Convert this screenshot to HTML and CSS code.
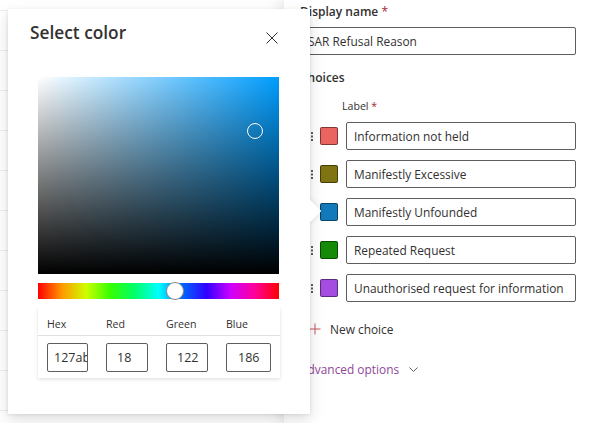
FILE: index.html
```html
<!DOCTYPE html>
<html lang="en">
<head>
<meta charset="utf-8">
<title>Select color</title>
<link rel="stylesheet" href="styles.css">
</head>
<body>
<div class="screen">
  <div class="bg-list">
    <div class="bg-row bg-row-first"></div>
    <div class="bg-row"></div>
    <div class="bg-row"></div>
    <div class="bg-row"></div>
    <div class="bg-row"></div>
    <div class="bg-row"></div>
    <div class="bg-row"></div>
    <div class="bg-row"></div>
    <div class="bg-row"></div>
    <div class="bg-row"></div>
    <div class="bg-row"></div>
  </div>
  <aside class="panel">
    <div class="field-label">Display name <span class="req">*</span></div>
    <div class="textbox name-box">SAR Refusal Reason</div>
    <div class="section-label">Choices</div>
    <div class="col-label">Label <span class="req">*</span></div>
    <ul class="choices">
      <li class="choice">
        <svg class="grip" width="2" height="9" viewBox="0 0 2 9"><rect y="0" width="2" height="2"/><rect y="3.5" width="2" height="2"/><rect y="7" width="2" height="2"/></svg>
        <span class="swatch sw-red"></span>
        <div class="textbox">Information not held</div>
      </li>
      <li class="choice">
        <svg class="grip" width="2" height="9" viewBox="0 0 2 9"><rect y="0" width="2" height="2"/><rect y="3.5" width="2" height="2"/><rect y="7" width="2" height="2"/></svg>
        <span class="swatch sw-olive"></span>
        <div class="textbox">Manifestly Excessive</div>
      </li>
      <li class="choice">
        <svg class="grip" width="2" height="9" viewBox="0 0 2 9"><rect y="0" width="2" height="2"/><rect y="3.5" width="2" height="2"/><rect y="7" width="2" height="2"/></svg>
        <span class="swatch sw-blue"></span>
        <div class="textbox">Manifestly Unfounded</div>
      </li>
      <li class="choice">
        <svg class="grip" width="2" height="9" viewBox="0 0 2 9"><rect y="0" width="2" height="2"/><rect y="3.5" width="2" height="2"/><rect y="7" width="2" height="2"/></svg>
        <span class="swatch sw-green"></span>
        <div class="textbox">Repeated Request</div>
      </li>
      <li class="choice">
        <svg class="grip" width="2" height="9" viewBox="0 0 2 9"><rect y="0" width="2" height="2"/><rect y="3.5" width="2" height="2"/><rect y="7" width="2" height="2"/></svg>
        <span class="swatch sw-purple"></span>
        <div class="textbox">Unauthorised request for information</div>
      </li>
    </ul>
    <div class="new-choice">
      <svg class="plus" width="12" height="12" viewBox="0 0 12 12"><path d="M6 0.5V11.5M0.5 6H11.5"/></svg>
      <span>New choice</span>
    </div>
    <div class="advanced">
      <span>Advanced options</span>
      <svg class="chev" width="9" height="5" viewBox="0 0 9 5"><path d="M0.5 0.5L4.5 4.5L8.5 0.5"/></svg>
    </div>
  </aside>
</div>

<div class="callout">
  <span class="beak"></span>
  <div class="callout-inner">
    <div class="callout-header">
      <h2 class="title">Select color</h2>
      <svg class="close" width="12" height="12" viewBox="0 0 12 12"><path d="M0.5 0.5L11.5 11.5M11.5 0.5L0.5 11.5"/></svg>
    </div>
    <div class="sv-area">
      <span class="sv-thumb"></span>
    </div>
    <div class="hue-bar">
      <span class="hue-thumb"></span>
    </div>
    <div class="values">
      <div class="values-head">
        <span class="vh">Hex</span>
        <span class="vh">Red</span>
        <span class="vh">Green</span>
        <span class="vh">Blue</span>
      </div>
      <div class="values-row">
        <div class="cell"><div class="vbox vb-hex">127aba</div></div>
        <div class="cell"><div class="vbox vb-red">18</div></div>
        <div class="cell"><div class="vbox vb-green">122</div></div>
        <div class="cell"><div class="vbox vb-blue">186</div></div>
      </div>
    </div>
  </div>
</div>
</body>
</html>
```
FILE: styles.css
```css
* { box-sizing: border-box; }
html, body { margin: 0; padding: 0; }
body {
  width: 598px;
  height: 423px;
  overflow: hidden;
  position: relative;
  background: #fff;
  font-family: "Open Sans", "Noto Sans", sans-serif;
  color: #323130;
}
.screen {
  display: grid;
  grid-template-columns: 284px minmax(0, 1fr);
  height: 423px;
}
.bg-list { background: #fff; }
.bg-row { height: 40px; border-bottom: 1px solid #efeeed; }
.bg-row-first { height: 11px; }

.panel {
  min-width: 0;
  background: #fff;
  box-shadow: 0 0 18px rgba(0,0,0,0.16);
  padding: 3px 22px 0 16px;
  position: relative;
  z-index: 1;
}
.field-label, .section-label {
  font-size: 12px;
  line-height: 18px;
  font-weight: 600;
}
.req { color: #a4262c; font-weight: 400; }
.textbox {
  min-width: 0;
  height: 28px;
  border: 1px solid #605e5c;
  border-radius: 2px;
  font-size: 11.9px;
  line-height: 26px;
  padding: 0 7px;
  white-space: nowrap;
  overflow: hidden;
}
.name-box { margin-top: 6px; }
.section-label { margin-top: 14px; }
.col-label {
  margin-top: 11px;
  margin-left: 42px;
  font-size: 10.6px;
  line-height: 16px;
}
.choices {
  list-style: none;
  margin: 8px 0 0;
  padding: 0;
  display: flex;
  flex-direction: column;
  gap: 10px;
}
.choice {
  display: flex;
  align-items: center;
}
.grip { fill: #605e5c; margin-left: 11px; width: 2px; flex: none; }
.swatch {
  width: 18px;
  height: 18px;
  border-radius: 2px;
  border: 1px solid rgba(0,0,0,0.45);
  margin-left: 7px;
  margin-right: 8px;
  flex: none;
}
.choice .textbox { flex: 1; }
.sw-red { background: #ea6560; }
.sw-olive { background: #807412; }
.sw-blue { background: #127aba; }
.sw-green { background: #148a08; }
.sw-purple { background: #a44de0; }

.new-choice {
  margin-top: 18px;
  display: flex;
  align-items: center;
  gap: 9px;
  font-size: 11.9px;
  line-height: 18px;
  padding-left: 9px;
}
.plus { stroke: #c4565b; stroke-width: 1; fill: none; }
.advanced {
  margin-top: 22px;
  display: flex;
  align-items: center;
  gap: 10px;
  font-size: 11.9px;
  line-height: 18px;
  color: #8f4799;
}
.chev { stroke: #605e5c; stroke-width: 1; fill: none; margin-top: 1px; }

/* Callout */
.callout {
  position: absolute;
  left: 8px;
  top: 9px;
  width: 302px;
  height: 405px;
  background: #fff;
  z-index: 5;
  box-shadow: 0 6.4px 14.4px rgba(0,0,0,0.13), 0 1.2px 3.6px rgba(0,0,0,0.11);
}
.beak {
  position: absolute;
  right: -8px;
  top: 194px;
  width: 16px;
  height: 16px;
  background: #fff;
  transform: rotate(45deg);
  box-shadow: 0 0 6px rgba(0,0,0,0.12);
}
.callout-inner {
  position: relative;
  background: #fff;
  height: 100%;
  padding: 12px 31px 0 30px;
}
.callout-header {
  display: flex;
  justify-content: space-between;
  align-items: flex-start;
  margin-left: -8px;
}
.title {
  margin: 0;
  font-size: 17.3px;
  line-height: 24px;
  font-weight: 600;
}
.close { stroke: #323130; stroke-width: 1; fill: none; margin-top: 11px; margin-right: 1px; }
.sv-area {
  margin-top: 32px;
  width: 241px;
  height: 197px;
  position: relative;
  background:
    linear-gradient(to top, #000, rgba(0,0,0,0)),
    linear-gradient(to right, #fff, hsl(203, 100%, 50%));
}
.sv-thumb {
  position: absolute;
  left: 209px;
  top: 46px;
  width: 16px;
  height: 16px;
  border-radius: 50%;
  border: 1.5px solid #fff;
  box-shadow: 0 0 1px rgba(0,0,0,0.4);
}
.hue-bar {
  margin-top: 9px;
  width: 241px;
  height: 16px;
  position: relative;
  background: linear-gradient(to left, red 0, #f09 10%, #cd00ff 20%, #3200ff 30%, #06f 40%, #00fffd 50%, #0f6 60%, #35ff00 70%, #cdff00 80%, #f90 90%, red 100%);
}
.hue-thumb {
  position: absolute;
  left: 128px;
  top: -1px;
  width: 18px;
  height: 18px;
  border-radius: 50%;
  background: #fff;
  border: 1px solid #8a8886;
}
.values {
  margin-top: 8px;
  width: 242px;
  box-shadow: 0 1.6px 3.6px rgba(0,0,0,0.13), 0 0.3px 0.9px rgba(0,0,0,0.11);
  padding-bottom: 6px;
}
.values-head, .values-row {
  display: grid;
  grid-template-columns: 59px 60px 60px 63px;
}
.values-head {
  height: 29px;
  border-bottom: 1px solid #e1dfdd;
  align-items: end;
  padding-bottom: 3px;
}
.vh { font-size: 10.6px; line-height: 16px; padding-left: 9px; }
.values-row { padding-top: 7px; }
.cell { padding-left: 9px; }
.vbox {
  height: 29px;
  border: 1px solid #605e5c;
  border-radius: 2px;
  font-size: 12.5px;
  line-height: 27px;
  padding-left: 6px;
  overflow: hidden;
  white-space: nowrap;
}
.vb-hex { width: 41px; }
.vb-red { width: 42px; padding-left: 10px; }
.vb-green { width: 42px; padding-left: 10px; }
.vb-blue { width: 45px; padding-left: 11px; }
```
